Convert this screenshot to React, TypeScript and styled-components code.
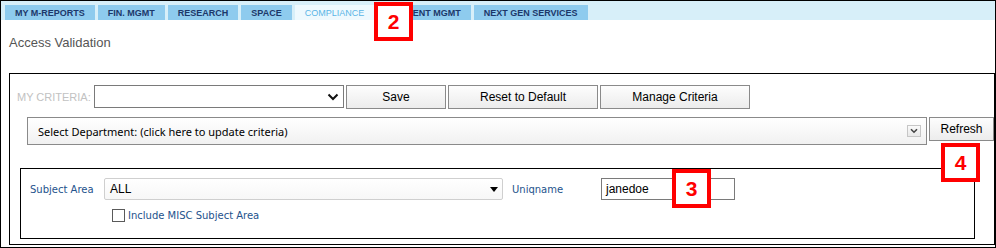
import React from "react";
import styled, { createGlobalStyle } from "styled-components";

const Global = createGlobalStyle`
  html, body { margin: 0; padding: 0; background: #fff; }
  body { font-family: "Liberation Sans", Arial, sans-serif; }
  * { box-sizing: border-box; }
`;

const Frame = styled.div`
  position: relative;
  width: 996px;
  height: 248px;
  border: 1px solid #000;
  background: #fff;
  overflow: hidden;
`;

const TabBar = styled.div`
  height: 19px;
  background: #d7eff9;
  display: flex;
  align-items: flex-end;
  gap: 3px;
  padding-left: 4px;
`;

const Tab = styled.div<{ $active?: boolean }>`
  height: 15px;
  padding: 0 10px;
  display: flex;
  align-items: center;
  font-family: "Liberation Sans", Arial, sans-serif;
  font-weight: bold;
  font-size: 9px;
  white-space: nowrap;
  background: ${(p) => (p.$active ? "#eef9fe" : "#8ecbee")};
  color: ${(p) => (p.$active ? "#5ab5e6" : "#1c386a")};
  font-weight: ${(p) => (p.$active ? "normal" : "bold")};
`;

const Title = styled.div`
  margin: 15px 0 0 8px;
  height: 15px;
  line-height: 15px;
  font-size: 13px;
  color: #555;
`;

const Panel = styled.div`
  margin: 23px 0 0 8px;
  height: 172px;
  border: 1px solid #000;
  padding-top: 11px;
`;

const CriteriaRow = styled.div`
  display: flex;
  align-items: center;
  gap: 2px;
  margin-left: 7px;
  height: 24px;
`;

const CriteriaLabel = styled.span`
  font-size: 11px;
  color: #c2c2c2;
  margin-right: 1px;
  width: 74px;
  white-space: nowrap;
`;

const CriteriaSelect = styled.div`
  width: 250px;
  height: 23px;
  border: 1px solid #7a7a7a;
  background: #fff;
  display: flex;
  align-items: center;
  justify-content: flex-end;
  padding-right: 4px;
  align-self: flex-start;
`;

const Button = styled.div<{ $w: number }>`
  width: ${(p) => p.$w}px;
  height: 24px;
  border: 1px solid #8a8a8a;
  background: linear-gradient(#fdfdfd, #ececec);
  display: flex;
  align-items: center;
  justify-content: center;
  font-size: 12px;
  color: #000;
  white-space: nowrap;
`;

const DeptRow = styled.div`
  display: flex;
  align-items: flex-start;
  gap: 2px;
  margin: 8px 0 0 17px;
`;

const DeptBox = styled.div`
  flex: 1;
  height: 28px;
  border: 1px solid #8a8a8a;
  background: linear-gradient(#ffffff, #f1f1f1);
  display: flex;
  align-items: center;
  padding: 0 5px 0 10px;
  font-family: "Noto Sans", "Open Sans", sans-serif;
  font-size: 11px;
  color: #000;
`;

const DeptText = styled.span`
  flex: 1;
  white-space: nowrap;
`;

const MiniArrow = styled.div`
  width: 14px;
  height: 12px;
  border: 1px solid #c6c6c6;
  background: linear-gradient(#fafafa, #e8e8e8);
  display: flex;
  align-items: center;
  justify-content: center;
`;

const SubjectBox = styled.div`
  margin: 23px 19px 0 10px;
  height: 71px;
  border: 1px solid #000;
  padding: 9px 0 0 9px;
`;

const FieldRow = styled.div`
  display: flex;
  align-items: center;
  height: 22px;
`;

const FieldLabel = styled.span<{ $w: number }>`
  width: ${(p) => p.$w}px;
  font-family: "DejaVu Sans", Verdana, sans-serif;
  font-size: 10px;
  color: #24528c;
  white-space: nowrap;
`;

const SubjectSelect = styled.div`
  width: 399px;
  height: 22px;
  border: 1px solid #cfcfcf;
  border-radius: 2px;
  background: linear-gradient(#ffffff, #f7f7f7);
  display: flex;
  align-items: center;
  justify-content: space-between;
  padding: 0 4px 0 5px;
  font-size: 12px;
  color: #000;
  margin-right: 9px;
`;

const TextInput = styled.div`
  width: 134px;
  height: 22px;
  border: 1px solid #7a7a7a;
  display: flex;
  align-items: center;
  padding-left: 4px;
  font-size: 12px;
  color: #000;
`;

const CheckRow = styled.div`
  display: flex;
  align-items: center;
  gap: 3px;
  margin: 9px 0 0 82px;
`;

const CheckBox = styled.span`
  width: 13px;
  height: 13px;
  border: 1px solid #5a5a5a;
  background: #fff;
  display: inline-block;
`;

const CheckLabel = styled.span`
  font-family: "DejaVu Sans", Verdana, sans-serif;
  font-size: 10px;
  color: #24528c;
`;

const Badge = styled.div`
  position: absolute;
  width: 39px;
  height: 39px;
  border: 4px solid #f00;
  background: #fff;
  display: flex;
  align-items: center;
  justify-content: center;
  font-family: "Liberation Sans", Arial, sans-serif;
  font-weight: bold;
  font-size: 21px;
  color: #f00;
`;

const tabs = [
  "MY M-REPORTS",
  "FIN. MGMT",
  "RESEARCH",
  "SPACE",
  "COMPLIANCE",
  "CONTENT MGMT",
  "NEXT GEN SERVICES",
];

export default function App() {
  return (
    <>
      <Global />
      <Frame>
        <TabBar>
          {tabs.map((t) => (
            <Tab key={t} $active={t === "COMPLIANCE"}>
              {t}
            </Tab>
          ))}
        </TabBar>
        <Title>Access Validation</Title>
        <Panel>
          <CriteriaRow>
            <CriteriaLabel>MY CRITERIA:</CriteriaLabel>
            <CriteriaSelect>
              <svg width="12" height="8" viewBox="0 0 12 8">
                <path d="M1.5 1.5 L6 6 L10.5 1.5" fill="none" stroke="#111" strokeWidth="2" />
              </svg>
            </CriteriaSelect>
            <Button $w={100}>Save</Button>
            <Button $w={150}>Reset to Default</Button>
            <Button $w={150}>Manage Criteria</Button>
          </CriteriaRow>
          <DeptRow>
            <DeptBox>
              <DeptText>Select Department: (click here to update criteria)</DeptText>
              <MiniArrow>
                <svg width="8" height="6" viewBox="0 0 8 6">
                  <path d="M1 1.2 L4 4.2 L7 1.2" fill="none" stroke="#444" strokeWidth="1.6" />
                </svg>
              </MiniArrow>
            </DeptBox>
            <Button $w={65}>Refresh</Button>
          </DeptRow>
          <SubjectBox>
            <FieldRow>
              <FieldLabel $w={74}>Subject Area</FieldLabel>
              <SubjectSelect>
                <span>ALL</span>
                <svg width="8" height="5" viewBox="0 0 8 5">
                  <path d="M0 0 L8 0 L4 5 Z" fill="#000" />
                </svg>
              </SubjectSelect>
              <FieldLabel $w={89}>Uniqname</FieldLabel>
              <TextInput>janedoe</TextInput>
            </FieldRow>
            <CheckRow>
              <CheckBox />
              <CheckLabel>Include MISC Subject Area</CheckLabel>
            </CheckRow>
          </SubjectBox>
        </Panel>
        <Badge style={{ left: 373, top: 1 }}>2</Badge>
        <Badge style={{ left: 671, top: 168 }}>3</Badge>
        <Badge style={{ left: 940, top: 142 }}>4</Badge>
      </Frame>
    </>
  );
}
